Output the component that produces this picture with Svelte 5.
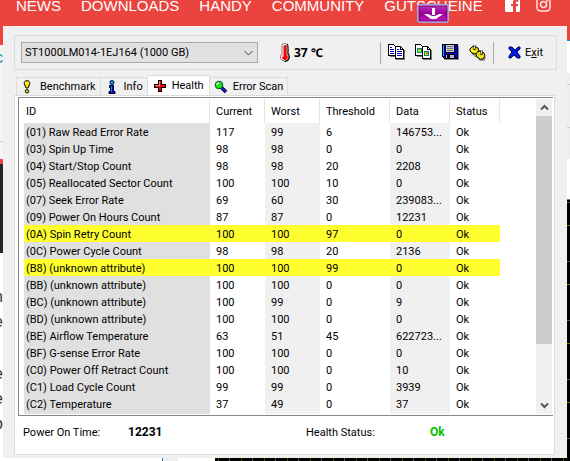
<script>
  const nav = ['NEWS', 'DOWNLOADS', 'HANDY', 'COMMUNITY', 'GUTSCHEINE'];
  const columns = ['ID', 'Current', 'Worst', 'Threshold', 'Data', 'Status'];
  const rows = [
    ['(01) Raw Read Error Rate', '117', '99', '6', '146753...', 'Ok'],
    ['(03) Spin Up Time', '98', '98', '0', '0', 'Ok'],
    ['(04) Start/Stop Count', '98', '98', '20', '2208', 'Ok'],
    ['(05) Reallocated Sector Count', '100', '100', '10', '0', 'Ok'],
    ['(07) Seek Error Rate', '69', '60', '30', '239083...', 'Ok'],
    ['(09) Power On Hours Count', '87', '87', '0', '12231', 'Ok'],
    ['(0A) Spin Retry Count', '100', '100', '97', '0', 'Ok', true],
    ['(0C) Power Cycle Count', '98', '98', '20', '2136', 'Ok'],
    ['(B8) (unknown attribute)', '100', '100', '99', '0', 'Ok', true],
    ['(BB) (unknown attribute)', '100', '100', '0', '0', 'Ok'],
    ['(BC) (unknown attribute)', '100', '99', '0', '9', 'Ok'],
    ['(BD) (unknown attribute)', '100', '100', '0', '0', 'Ok'],
    ['(BE) Airflow Temperature', '63', '51', '45', '622723...', 'Ok'],
    ['(BF) G-sense Error Rate', '100', '100', '0', '0', 'Ok'],
    ['(C0) Power Off Retract Count', '100', '100', '0', '10', 'Ok'],
    ['(C1) Load Cycle Count', '99', '99', '0', '3939', 'Ok'],
    ['(C2) Temperature', '37', '49', '0', '37', 'Ok']
  ];
  let active = $state('Health');
  const tabs = ['Benchmark', 'Info', 'Health', 'Error Scan'];
</script>

<div class="page">
  <header>
    <nav>
      {#each nav as item}<a href="#{item.toLowerCase()}">{item}</a>{/each}
      <a class="social fb" href="#facebook" aria-label="Facebook">
        <svg width="15" height="15" viewBox="0 0 15 15"><path fill="#fff" d="M1 0h13l1 1v13l-1 1h-3V9h2V7h-2V5.500q0-1 1-1h1.500V2.500H11Q8 2.500 8 5v2H6v2h2v6H1l-1-1V1z" /></svg>
      </a>
      <a class="social" href="#instagram" aria-label="Instagram">
        <svg width="15" height="15" viewBox="0 0 15 15" fill="none" stroke="#ffe4e2" stroke-width="1.500"><rect x="1" y="1" width="13" height="13" rx="3.500" /><circle cx="7.500" cy="7.500" r="3" /><circle cx="11.300" cy="3.700" r=".4" /></svg>
      </a>
    </nav>
    <svg class="drop" width="32" height="19" viewBox="0 0 32 19">
      <defs><linearGradient id="purple" x2="0" y2="1"><stop stop-color="#bd30bd" /><stop offset=".5" stop-color="#980098" /><stop offset="1" stop-color="#bf16bf" /></linearGradient></defs>
      <rect x=".5" y=".5" width="31" height="18" rx="2" fill="#f3c5f5" stroke="#a9a0e8" />
      <rect x="2" y="2" width="28" height="15" fill="url(#purple)" stroke="#5c085f" />
      <path d="M15 4h3v7h-3z" fill="#fff" /><path d="M7 10h4l4 2h3l4-2h4l-7 5h-5z" fill="#fff" />
    </svg>
  </header>

  <div class="middle">
    <div class="left-strip" aria-hidden="true">
      <span class="blue">c</span><span>n</span><span>e</span><span class="late">e</span><span>e</span><span>o</span>
    </div>

    <main>
      <div class="toolbar">
        <select aria-label="Drive"><option>ST1000LM014-1EJ164 (1000 GB)</option></select>
        <svg class="chevron" width="9" height="6" viewBox="0 0 9 6"><path d="M.5 1l4 4 4-4" fill="none" stroke="#444" /></svg>
        <svg class="thermo" width="11" height="19" viewBox="0 0 11 19">
          <path d="M3 2.500Q3 .5 5.500 .5T8 2.500V11q2.500 2 1.500 4.500-1 2.500-4 2.500t-4-2.500Q.5 13 3 11z" fill="#fff" stroke="#777" />
          <path d="M8 1q1.500 1 1 9.500 2 2 1 5-1 3-4.500 3" fill="none" stroke="#111" stroke-width="1.200" />
          <path d="M4.500 3Q6 1 7.500 3v8.500q2 2 1 4T5.500 17 3 15q-.5-2 1.500-3.500z" fill="#f00" />
          <path d="M3.500 14l1-1.500" stroke="#fff" />
        </svg>
        <strong class="temp">37 ℃</strong>
        <div class="tools">
          <button aria-label="Copy text">
            <svg width="17" height="17" viewBox="0 0 17 17" shape-rendering="crispEdges">
              <path fill="#777" d="M2 12h5v1H2zM8 15h8V6h1v10H8z" /><path fill="#fff" stroke="#000" d="M.5 .5h5l3 3v8h-8z" /><path stroke="#00c" d="M2 3.500h2M2 5.500h4M2 7.500h4M2 9.500h4" />
              <path fill="#fff" stroke="#000" d="M7.500 2.500h5l3 3v9h-8z" /><path fill="none" stroke="#000" d="M12.500 2.500v3h3" /><path stroke="#00c" d="M9 5.500h2M9 7.500h5M9 9.500h5M9 11.500h5" />
            </svg>
          </button>
          <button aria-label="Copy screenshot">
            <svg width="17" height="17" viewBox="0 0 17 17" shape-rendering="crispEdges">
              <path fill="#777" d="M2 12h5v1H2zM8 15h8V6h1v10H8z" /><path fill="#fff" stroke="#000" d="M.5 .5h5l3 3v8h-8z" /><path fill="#088" d="M2 4h5v5H2z" /><path fill="#8f0" d="M3 5h3v3H3z" /><path fill="#f60" d="M4 5h2v1H4z" />
              <path fill="#fff" stroke="#000" d="M7.500 2.500h5l3 3v9h-8z" /><path fill="none" stroke="#000" d="M12.500 2.500v3h3" /><path fill="#088" d="M9 7h5v5H9z" /><path fill="#8f0" d="M10 8h3v3h-3z" /><path fill="#f60" d="M11 8h2v2h-2z" />
            </svg>
          </button>
          <button aria-label="Save">
            <svg width="17" height="17" viewBox="0 0 17 17" shape-rendering="crispEdges">
              <path fill="#888" d="M2 15h14V2h1v14H2z" /><path fill="#0000e0" stroke="#000" d="M.5 .5h15v14h-13l-2-2z" /><path fill="#0af" d="M1 1h1v11H1z" /><path fill="#c8c8c8" stroke="#000" d="M3.500 .5h9v8h-9z" /><path stroke="#777" d="M5 2.500h6M5 4.500h6M5 6.500h6" /><path fill="#bbb" stroke="#000" d="M3.500 10.500h9v4h-9z" /><path fill="#003" d="M5 11h3v3H5z" />
            </svg>
          </button>
          <button aria-label="Options">
            <svg width="17" height="17" viewBox="0 0 17 17">
              <path d="M3 9l3 3 3 1 2 3h4l1-3" fill="none" stroke="#888" stroke-width="1.500" />
              <g fill="#e8df00" stroke="#000"><path d="M1 5l2-2 2-1 4 2 1 3-1 2-3 1-3-1-2-2z" /><path d="M7 10l1-2 3-1 4 2 1 3-2 3-3 0-3-2z" /></g>
              <g fill="none" stroke="#ff5"><path d="M2 6l3 2h3M8 11l3 3 3-1" /></g><path d="M5.500 1v5M12.500 6v5" stroke="#111" stroke-width="2" /><path d="M5.500 1v4M12.500 6v4" stroke="#ccc" />
            </svg>
          </button>
        </div>
        <button class="exit">
          <svg width="13" height="13" viewBox="0 0 13 13"><path d="M1 1h3l3 3 3-3h2v2L9 6l3 4v2H9L6 9l-3 3H1v-2l3-4-3-3z" fill="#0018e0" stroke="#001050" /></svg>
          <span>E<u>x</u>it</span>
        </button>
      </div>

      <div class="tabs" role="tablist">
        {#each tabs as tab}
          <button role="tab" aria-selected={active === tab} class:active={active === tab} onclick={() => (active = tab)}>
            {#if tab === 'Benchmark'}
              <svg width="14" height="14" viewBox="0 0 14 14"><path d="M6 .7c2 0 3 1 2.700 3L7 8H5L3.300 3.700C3 1.700 4 .7 6 .7z" fill="#fff000" stroke="#000" /><path d="M4.500 2v2" stroke="#fff" /><circle cx="6" cy="11.300" r="1.700" fill="#fff000" stroke="#000" /></svg>
            {:else if tab === 'Info'}
              <svg width="14" height="14" viewBox="0 0 14 14"><circle cx="7" cy="2.500" r="2" fill="#0af" stroke="#003" /><path d="M4.500 5.500h4v6h1.500v2H4v-2h1.500v-4h-1z" fill="#00f" stroke="#000" /><path d="M6.500 6v6" stroke="#08f" /></svg>
            {:else if tab === 'Health'}
              <svg width="14" height="14" viewBox="0 0 14 14" shape-rendering="crispEdges"><path d="M5.500 1.500h3v4h4v3h-4v4h-3v-4h-4v-3h4z" fill="#f00" stroke="#000" /><path d="M6.500 2v4.500H2" fill="none" stroke="#f88" /></svg>
            {:else}
              <svg width="14" height="14" viewBox="0 0 14 14"><path d="M7 7l5 5" stroke="#003" stroke-width="3.500" /><path d="M8 8l4 4" stroke="#22f" stroke-width="1.200" /><circle cx="5" cy="5" r="3.800" fill="#1de31d" stroke="#052" /><path d="M3 5q0-2 2-2" fill="none" stroke="#dfd" stroke-width="1.500" /></svg>
            {/if}
            <span>{tab}</span>
          </button>
        {/each}
      </div>

      <section class="panel" role="tabpanel">
        <div class="list">
          <table>
            <thead><tr>{#each columns as column}<th>{column}</th>{/each}<th class="rest" aria-label="Blank"></th></tr></thead>
            <tbody>
              {#each rows as [id, current, worst, threshold, data, status, warn]}
                <tr class:warn><td>{id}</td><td>{current}</td><td>{worst}</td><td>{threshold}</td><td>{data}</td><td>{status}</td><td class="rest"></td></tr>
              {/each}
            </tbody>
          </table>
          <div class="scroll">
            <button aria-label="Scroll up"><svg width="9" height="7" viewBox="0 0 9 7"><path d="M1 5.500L4.500 2 8 5.500" fill="none" stroke="#555" stroke-width="2" /></svg></button>
            <div class="thumb"></div>
            <button class="down" aria-label="Scroll down"><svg width="9" height="7" viewBox="0 0 9 7"><path d="M1 1.500L4.500 5 8 1.500" fill="none" stroke="#555" stroke-width="2" /></svg></button>
          </div>
        </div>
        <div class="summary">
          <span class="label">Power On Time:</span><strong>12231</strong>
          <span class="label second">Health Status:</span><strong class="ok">Ok</strong>
        </div>
      </section>
    </main>
    <div class="right-strip" aria-hidden="true"></div>
  </div>
  <div class="bottom-strip" aria-hidden="true"></div>
</div>

<style>
  :global(body) { margin: 0; background: #fff; }
  .page { font: 11px/17px Roboto, "Liberation Sans", sans-serif; color: #000; overflow: hidden; }
  button { font: inherit; color: inherit; border: 0; padding: 0; background: none; }
  svg { display: block; flex: none; }
  header { position: relative; height: 26px; background: #eb443f; overflow: hidden; }
  nav { display: flex; align-items: flex-start; gap: 20px; padding-left: 16px; }
  nav a { font: 15px/12px "Liberation Sans", Arial, sans-serif; color: #fff; text-decoration: none; }
  nav .social { margin: -3px 0 0 -4px; }
  nav .fb { margin-left: 2px; }
  .drop { position: absolute; left: 417px; top: 4px; }
  .middle { display: grid; grid-template-columns: 3px minmax(0, 1fr) 3px; }
  .left-strip {
    overflow: hidden; display: flex; flex-direction: column; align-items: flex-end;
    font: 16px/25px "Liberation Sans", sans-serif; color: #333;
    background: linear-gradient(#eb443f 19px, #f5f5f5 19px 115px, #ccc 115px 116px, #f5f5f5 116px 133px, #eb443f 133px 138px, #202a2c 138px 227px, #fff 227px);
  }
  .left-strip .blue { color: #28a; margin: 19px 0 214px; }
  .left-strip .late { margin-top: 27px; }
  .right-strip {
    background:
      linear-gradient(#eb443f 14px, #18c 14px 15px, #fff 15px 47px, #eee 47px 58px, #ccc 58px 59px, #eee 59px 101px, #ccc 101px 102px, #eee 102px 133px, #fff 133px 173px, #777 173px 174px, transparent 174px),
      repeating-linear-gradient(#000 0 22px, #777700 22px 23px, #000 23px 58px, #555 58px 59px);
  }
  .bottom-strip {
    height: 3px;
    background:
      linear-gradient(90deg, #fff 162px, #18c 162px 163px, #eee 163px 178px, #fff 178px 215px, transparent 215px),
      repeating-linear-gradient(90deg, #000 0 11px, #444400 11px 12px, #000 12px 22px, #555 22px 23px);
  }
  main { background: #f0f0f0; padding: 9px 12px 3px 11px; }
  .toolbar { display: flex; align-items: center; height: 33px; border: 1px solid #dcdcdc; padding: 0 6px; margin: 0 -2px 5px 0; }
  select { width: 237px; height: 21px; border: 1px solid #a8a8a8; border-radius: 0; background: #e1e1e1; font: inherit; color: #000; appearance: none; padding: 0 3px; }
  .chevron { margin-left: -14px; pointer-events: none; }
  .thermo { margin-left: 26px; }
  .temp { margin-left: 4px; font: bold 12px/17px "Noto Sans", "Noto Sans CJK SC", sans-serif; white-space: nowrap; }
  .tools { display: flex; align-items: center; gap: 10px; margin-left: auto; height: 22px; border: solid #a8a8a8; border-width: 0 1px; padding: 0 7px; }
  .exit { display: flex; align-items: center; gap: 4px; margin: 0 7px 0 14px; }
  .tabs { display: flex; align-items: flex-end; height: 20px; padding-left: 2px; }
  .tabs button { display: flex; align-items: center; gap: 5px; height: 18px; border: 1px solid #dcdcdc; border-width: 1px 1px 0 0; padding: 0 4px; white-space: nowrap; }
  .tabs button:first-child { border-left-width: 1px; }
  .tabs .active { height: 20px; background: #fff; padding: 0 5px; }
  .panel { background: #fff; border: 1px solid #dcdcdc; padding: 1px 1px 0 3px; }
  .list { display: flex; border: 1px solid #828790; border-right: 0; padding: 1px 1px 1px 5px; }
  table { flex: 1; min-width: 0; table-layout: fixed; border-collapse: collapse; }
  th, td { padding: 0 0 0 6px; text-align: left; font-weight: normal; white-space: nowrap; }
  td { padding-top: 2px; height: 15px; line-height: 15px; vertical-align: top; }
  tr:last-child td { height: 17px; }
  th { height: 24px; box-shadow: inset -1px 0 #e5e5e5; }
  th:nth-child(1), td:nth-child(1) { padding-left: 2px; }
  th:nth-child(1) { width: 184px; }
  th:nth-child(2), th:nth-child(3) { width: 49px; }
  th:nth-child(4) { width: 64px; }
  th:nth-child(5) { width: 54px; }
  th:nth-child(6) { width: 44px; }
  td:nth-child(1) { background: #e0e0e0; }
  td:nth-child(3), td:nth-child(5) { background: #f0f0f0; }
  .warn td:not(.rest) { background: #ffff30; }
  th.rest, td.rest { padding-left: 0; box-shadow: none; }
  .scroll { width: 16px; background: #f0f0f0; display: flex; flex-direction: column; }
  .scroll button { height: 17px; display: flex; align-items: center; justify-content: center; }
  .scroll .thumb { height: 228px; background: #cdcdcd; }
  .scroll .down { margin-top: auto; }
  .summary { display: flex; align-items: center; height: 38px; padding: 0 0 0 5px; }
  .summary .label { width: 105px; padding-bottom: 6px; }
  .summary strong { width: 178px; padding-bottom: 6px; font-size: 12px; }
  .summary .second { width: 124px; }
  .summary .ok { width: auto; color: #00c000; }
</style>
